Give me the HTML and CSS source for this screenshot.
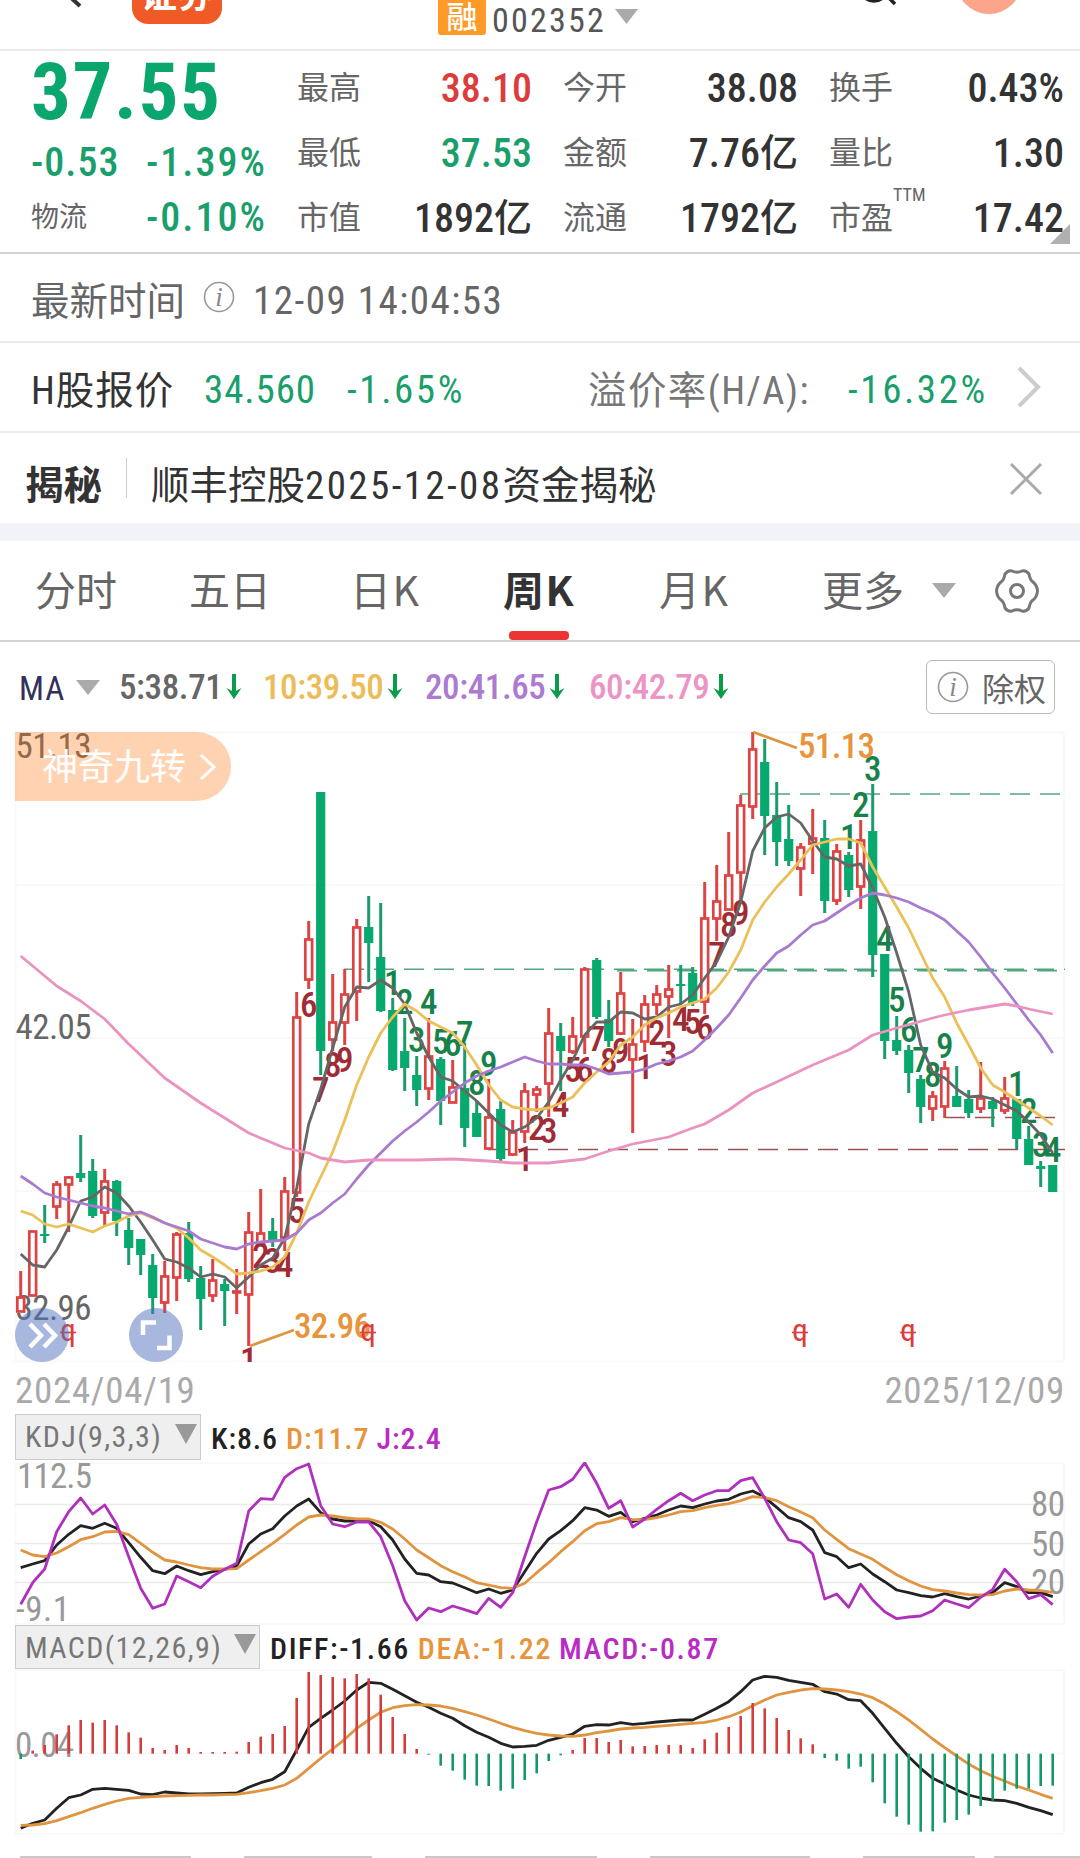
FILE: index.html
```html
<!DOCTYPE html>
<html lang="zh-CN">
<head>
<meta charset="utf-8">
<title>顺丰控股 002352</title>
<link rel="stylesheet" href="styles.css">
</head>
<body>
<header class="topbar">
  <svg class="back" width="30" height="8" viewBox="0 0 30 8"><path d="M15 -4L26 6" stroke="#333" stroke-width="4" fill="none"/></svg>
  <span class="broker">证券</span>
  <span class="rong">融</span>
  <span class="code">002352</span>
  <i class="tri tri-code"></i>
  <svg class="search" width="40" height="8" viewBox="0 0 40 8"><circle cx="14" cy="-13" r="14" fill="none" stroke="#222" stroke-width="3.5"/><path d="M25 -6L35 4" stroke="#222" stroke-width="3.5"/></svg>
  <svg class="avatar" width="66" height="16" viewBox="0 0 66 16"><circle cx="33" cy="-19" r="33" fill="#fda58a"/></svg>
</header>

<section class="quote">
  <div class="price">
    <strong class="last">37.55</strong>
    <div class="chg"><span>-0.53</span><span class="pct">-1.39%</span></div>
    <div class="chg"><em>物流</em><span class="pct">-0.10%</span></div>
  </div>
  <dl class="stats">
    <dt>最高</dt><dd class="up">38.10</dd><dt>今开</dt><dd>38.08</dd><dt>换手</dt><dd>0.43%</dd>
    <dt>最低</dt><dd class="down">37.53</dd><dt>金额</dt><dd>7.76<b>亿</b></dd><dt>量比</dt><dd>1.30</dd>
    <dt>市值</dt><dd>1892<b>亿</b></dd><dt>流通</dt><dd>1792<b>亿</b></dd><dt>市盈<sup>TTM</sup></dt><dd>17.42</dd>
  </dl>
  <svg class="corner" width="20" height="20" viewBox="0 0 20 20"><path d="M20 0V20H0Z" fill="#b0b0b0"/></svg>
</section>

<section class="row time">
  <span class="cjk grey">最新时间</span>
  <svg class="info" width="32" height="32" viewBox="0 0 32 32"><circle cx="16" cy="16" r="14.5"/><text x="16" y="25">i</text></svg>
  <span class="num grey stamp">12-09 14:04:53</span>
</section>

<section class="row hshare">
  <span class="cjk dark">H股报价</span>
  <span class="num down">34.560</span>
  <span class="num down pct">-1.65%</span>
  <span class="cjk prem">溢价率(H/A):</span>
  <span class="num down pct">-16.32%</span>
  <svg width="26" height="42" viewBox="0 0 26 42"><path d="M3 2L22 21L3 40" fill="none" stroke="#ccc" stroke-width="4"/></svg>
</section>

<section class="row secret">
  <b class="cjk">揭秘</b>
  <i class="bar"></i>
  <span class="cjk dark">顺丰控股<span class="num">2025-12-08</span>资金揭秘</span>
  <svg width="34" height="34" viewBox="0 0 34 34"><path d="M2 2L32 32M32 2L2 32" stroke="#aaa" stroke-width="3"/></svg>
</section>

<nav class="tabs">
  <span>分时</span><span>五日</span><span>日K</span><span class="on">周K</span><span>月K</span><span>更多</span>
  <i class="tri"></i>
  <svg width="44" height="46" viewBox="0 0 44 46"><path d="M10 6Q13 2 17 3Q22 5.500 27 3Q31 2 34 6Q35 12 38 14Q42 17 42.500 23Q42 29 38 32Q35 34 34 40Q31 44 27 43Q22 40.500 17 43Q13 44 10 40Q9 34 6 32Q2 29 1.500 23Q2 17 6 14Q9 12 10 6Z" fill="none" stroke="#777" stroke-width="3" stroke-linejoin="round"/><circle cx="22" cy="23" r="6.500" fill="none" stroke="#777" stroke-width="3"/></svg>
</nav>

<section class="ma">
  <span class="ma-name">MA</span><i class="tri"></i>
  <span class="m5">5:38.71<svg class="arr" viewBox="0 0 16 25"><path d="M8 0V20"/><path class="head" d="M0.500 14L8 18L15.500 14L8 25Z"/></svg></span>
  <span class="m10">10:39.50<svg class="arr" viewBox="0 0 16 25"><path d="M8 0V20"/><path class="head" d="M0.500 14L8 18L15.500 14L8 25Z"/></svg></span>
  <span class="m20">20:41.65<svg class="arr" viewBox="0 0 16 25"><path d="M8 0V20"/><path class="head" d="M0.500 14L8 18L15.500 14L8 25Z"/></svg></span>
  <span class="m60">60:42.79<svg class="arr" viewBox="0 0 16 25"><path d="M8 0V20"/><path class="head" d="M0.500 14L8 18L15.500 14L8 25Z"/></svg></span>
  <button class="adjust"><svg class="info" width="32" height="32" viewBox="0 0 32 32"><circle cx="16" cy="16" r="14.500"/><text x="16" y="25">i</text></svg>除权</button>
</section>

<section class="kchart">
  <svg id="kline" width="1080" height="640" viewBox="0 725 1080 640"></svg>
  <div class="nine">神奇九转<svg width="18" height="28" viewBox="0 0 18 28"><path d="M2 2L15 14L2 26" fill="none" stroke="#fff" stroke-width="3"/></svg></div>
  <svg class="round expand" width="54" height="54" viewBox="0 0 54 54"><circle cx="27" cy="27" r="27"/><path d="M15 16L26 27.500L15 39M29 16L40 27.500L29 39"/></svg>
  <svg class="round full" width="54" height="54" viewBox="0 0 54 54"><circle cx="27" cy="27" r="27"/><path d="M14 27V14.500H27M28 40H40.500V27.500"/></svg>
</section>
<div class="dates"><span>2024/04/19</span><span>2025/12/09</span></div>

<div class="ind">
  <span class="pick kdj-pick">KDJ(9,3,3)<i class="tri"></i></span>
  <span class="k">K:8.6</span><span class="d">D:11.7</span><span class="j">J:2.4</span>
</div>
<svg id="kdj" width="1080" height="163" viewBox="0 1462 1080 163"></svg>
<div class="ind macd">
  <span class="pick macd-pick">MACD(12,26,9)<i class="tri"></i></span>
  <span class="k">DIFF:-1.66</span><span class="d">DEA:-1.22</span><span class="j">MACD:-0.87</span>
</div>
<svg id="macd" width="1080" height="187" viewBox="0 1669 1080 187"></svg>
<footer class="stubs"><i></i><i></i><i></i><i></i><i></i><i></i></footer>
<script src="chart.js"></script>
</body>
</html>
```
FILE: styles.css
```css
* { box-sizing: border-box; }
body {
  margin: 0;
  width: 1080px;
  height: 1858px;
  overflow: hidden;
  background: #fff;
  color: #333;
  font-family: "Roboto Condensed", "Noto Sans CJK SC", sans-serif;
}
i, em { font-style: normal; }
svg { display: block; flex: none; }
.tri {
  flex: none;
  width: 24px;
  height: 15px;
  background: #aaa;
  clip-path: polygon(0 0, 100% 0, 50% 100%);
}
.up { color: #dc3c3c; }
.down { color: #1a9f6c; }
.grey { color: #666; }
.dark { color: #333; }

.topbar {
  display: flex;
  align-items: flex-start;
  height: 51px;
  border-bottom: 2px solid #ebebeb;
  overflow: hidden;
}
.back { margin-left: 54px; }
.broker {
  width: 90px;
  height: 54px;
  margin: -30px 0 0 48px;
  border-radius: 16px;
  background: #f05a26;
  color: #fff;
  font: 700 36px/44px "Noto Sans CJK SC", sans-serif;
  text-align: center;
}
.rong {
  width: 48px;
  height: 47px;
  margin: -12px 0 0 216px;
  border-radius: 3px;
  background: #fd9a28;
  color: #fff;
  font: 500 31px/54px "Noto Sans CJK SC", sans-serif;
  text-align: center;
}
.code {
  width: 121px;
  margin-left: 6px;
  color: #555;
  font-size: 34px;
  line-height: 41px;
  letter-spacing: 2.2px;
}
.tri-code { margin: 9px 0 0 2px; width: 23px; }
.search { margin-left: 222px; }
.avatar { margin-left: 56px; }

.quote {
  position: relative;
  display: grid;
  grid-template-columns: 266px 1fr;
  height: 203px;
  padding-left: 31px;
  border-bottom: 2px solid #d2d2d2;
}
.price { color: #1a9f6c; }
.last {
  display: block;
  height: 80px;
  color: #09a66d;
  font-size: 79px;
  line-height: 83px;
  letter-spacing: 1.6px;
}
.chg {
  display: grid;
  grid-template-columns: 115px 1fr;
  height: 55px;
  font-size: 40px;
  font-weight: 500;
  line-height: 64px;
  letter-spacing: 1px;
}
.chg .pct { letter-spacing: 2px; }
.chg em {
  color: #666;
  font-size: 28px;
  font-weight: 400;
  letter-spacing: 0;
}
.stats {
  display: grid;
  grid-template-columns: 94px 141px 125px 141px 125px 141px;
  grid-auto-rows: 65px;
  margin: 3px 0 0;
}
.stats dt {
  color: #666;
  font-size: 32px;
  line-height: 68px;
  white-space: nowrap;
}
.stats dt:nth-of-type(3n + 2), .stats dt:nth-of-type(3n) { padding-left: 31px; }
.stats dd {
  display: flex;
  justify-content: flex-end;
  margin: 0;
  font-size: 40px;
  font-weight: 500;
  line-height: 69px;
  text-align: right;
  white-space: nowrap;
}
.stats b {
  font-size: 38px;
  font-weight: 500;
}
.stats sup {
  font-size: 18px;
  line-height: 0;
  vertical-align: 28px;
}
.corner { position: absolute; right: 10px; bottom: 8px; }

.row {
  display: flex;
  align-items: center;
  border-bottom: 2px solid #ebebeb;
}
.cjk { font-size: 38.5px; white-space: nowrap; }
.num { font-size: 39px; letter-spacing: 0.9px; white-space: nowrap; padding-top: 6px; }
.num.pct { letter-spacing: 2.6px; }
.info circle { fill: none; stroke: #999; stroke-width: 1.6; }
.info text {
  fill: #888;
  font: italic 27px "Liberation Serif", serif;
  text-anchor: middle;
}
.time { height: 89px; padding-left: 31px; }
.time .info { margin: -2px 18px 0 18px; }
.time .cjk { width: 154px; }
.time .num { letter-spacing: 1.5px; }
.hshare {
  display: grid;
  grid-template-columns: 173px 143px 241px 260px 168px 1fr;
  height: 90px;
  padding-left: 31px;
}
.hshare .cjk { letter-spacing: 1px; }
.hshare .prem { color: #777; letter-spacing: 1.4px; }
.secret { height: 90px; padding-left: 25px; border: 0; }
.secret .cjk { padding-top: 7px; }
.secret .num { letter-spacing: 2.4px; }
.secret b { width: 101px; font-weight: 700; color: #333; }
.bar { width: 1px; height: 40px; background: #ccc; margin-right: 24px; }
.secret svg { margin: 1px 37px 0 auto; }

.tabs {
  display: flex;
  align-items: center;
  height: 119px;
  border-top: 18px solid #f2f3f8;
  border-bottom: 2px solid #d2d2d2;
  padding-left: 35px;
  color: #666;
  font: 400 41px/59px "Noto Sans CJK SC", sans-serif;
}
.tabs span { position: relative; top: -2px; width: 154px; white-space: nowrap; }
.tabs span:nth-child(2) { width: 161px; }
.tabs span:nth-child(3) { width: 153px; letter-spacing: 1.5px; }
.tabs span:nth-child(5) { width: 163px; letter-spacing: 1.5px; }
.tabs span:nth-child(6) { width: 110px; }
.tabs .on { width: 156px; color: #333; font-weight: 700; letter-spacing: 1.5px; }
.tabs .on::after {
  content: "";
  position: absolute;
  left: 6px;
  bottom: -22px;
  width: 60px;
  height: 9px;
  border-radius: 4px;
  background: #ec3434;
}
.tabs svg { margin-left: 39px; }

.ma {
  display: grid;
  grid-template-columns: 57px 43px 144px 162px 164px 337px 129px;
  align-items: center;
  height: 83px;
  padding: 8px 0 0 19px;
  font-size: 35px;
  line-height: 40px;
  letter-spacing: -0.4px;
  font-weight: 500;
}
.ma > span { display: flex; align-items: center; }
.ma .ma-name { color: #33305c; font-size: 33px; font-weight: 400; padding-top: 3px; letter-spacing: 1px; }
.m5 { color: #666; }
.m10 { color: #ebbc58; }
.m20 { color: #ad7ad2; }
.m60 { color: #ec94c4; }
.arr { width: 16px; height: 25px; margin: -3px 0 0 4px; }
.arr path { fill: none; stroke: #0a9c4a; stroke-width: 4; }
.arr .head { fill: #0a9c4a; stroke: none; }
.adjust {
  display: flex;
  align-items: center;
  justify-content: space-between;
  height: 54px;
  margin-top: -1px;
  padding: 0 8px 0 10px;
  border: 1.5px solid #bbb;
  border-radius: 6px;
  background: #fff;
  color: #666;
  font: 400 32px/48px "Noto Sans CJK SC", sans-serif;
}

.kchart { position: relative; height: 640px; }
.nine {
  position: absolute;
  left: 15px;
  top: 7px;
  display: flex;
  align-items: center;
  justify-content: space-between;
  width: 216px;
  height: 69px;
  padding: 3px 14px 0 27px;
  border-radius: 0 36px 36px 0;
  background: rgba(255, 113, 3, 0.31);
  color: #fff;
  font-size: 36px;
  line-height: 66px;
}
.nine svg { margin-top: -3px; }
.round { position: absolute; top: 583px; }
.round circle { fill: rgba(80, 112, 190, 0.5); }
.round path { fill: none; stroke: #fff; stroke-width: 4.5; }
.expand { left: 15px; }
.full { left: 129px; }

.dates {
  display: flex;
  justify-content: space-between;
  height: 49px;
  padding: 0 15px;
  color: #aaa;
  font-size: 37px;
  line-height: 52px;
  letter-spacing: 0.7px;
}
.ind {
  display: flex;
  height: 48px;
  padding-left: 15px;
  font-size: 30px;
  font-weight: 500;
  line-height: 50px;
  letter-spacing: 0.9px;
}
.kdj-pick { margin: 0 0 2px; }
.macd { height: 44px; line-height: 47px; margin-top: 0; }
.pick {
  display: flex;
  align-items: center;
  justify-content: space-between;
  padding: 0 3px 0 9px;
  border: 1.5px solid #ccc;
  background: #efefef;
  color: #777;
  font-weight: 400;
}
.ind .pick { letter-spacing: 1.4px; }
.pick .tri { width: 22px; height: 20px; margin-bottom: 6px; background: #999; }
.kdj-pick { width: 186px; }
.macd-pick { width: 245px; }
.k { margin-left: 10px; color: #222; }
.d { margin-left: 8px; color: #e8943a; }
.j { margin-left: 7px; color: #b92cc4; }
.macd span + span { letter-spacing: 1.6px; }
.stubs {
  display: grid;
  grid-template-columns: 171px 128px 172px 160px 112px 82px;
  column-gap: 53px;
  padding-left: 20px;
  height: 2px;
}
.stubs i { background: #c8c8c8; }
.stubs i:last-child { margin-left: -34px; }

.grid { stroke: #f9f9f9; stroke-width: 2; fill: none; }
.axis { fill: #666; font-size: 35px; }
.axis-light { fill: #999; font-size: 35px; }
.peak { fill: #e8943a; font-size: 35px; font-weight: 500; }
.turn { font-size: 35px; font-weight: 500; text-anchor: middle; }
.mark { fill: #dc3c3c; font-size: 31px; font-weight: 400; text-anchor: middle; }
.ln { fill: none; stroke-width: 2.8; stroke-linejoin: round; }
```
FILE: chart.js
```javascript
const X0 = 20.7, STEP = 12;
const px = i => X0 + STEP * i;
const GREEN = '#07a96e', RED = '#dc4444', WICK = '#1b9c6c';

const line = (pts, color) =>
  `<polyline class="ln" stroke="${color}" points="${pts.map(p => px(p[0]).toFixed(1) + ',' + p[1].toFixed(1)).join(' ')}"/>`;
const seg = (x1, y1, x2, y2, color, w, extra = '') =>
  `<path d="M${x1} ${y1}L${x2} ${y2}" stroke="${color}" stroke-width="${w}" ${extra}/>`;
const text = (cls, x, y, s, w, extra = '') =>
  `<text class="${cls}" x="${x}" y="${y}" ${w ? `textLength="${w}"` : ''} ${extra}>${s}</text>`;
const each = a => a.map((v, i) => [i, v]);

// direction, high, body top, body bottom, low
const candles = `r 1271 1297 1312 1312|r 1231 1231 1296 1296|g 1205 1234 1236 1243|r 1181 1184 1207 1219|r 1176 1177 1185 1232|g 1135 1173 1178 1182|g 1159 1171 1216 1218|r 1169 1181 1213 1226|g 1180 1181 1221 1236|g 1218 1230 1248 1265|g 1239 1239 1255 1275|g 1254 1265 1298 1314|r 1261 1276 1303 1313|r 1232 1234 1278 1301|g 1222 1233 1279 1282|g 1266 1278 1299 1330|r 1259 1280 1296 1302|g 1279 1284 1291 1326|r 1269 1291 1293 1314|r 1212 1232 1295 1346|r 1189 1233 1245 1245|g 1218 1231 1241 1247|r 1177 1191 1238 1251|r 992 1017 1193 1197|r 921 939 980 989|g 792 792 1051 1075|r 974 1022 1040 1051|r 969 994 1023 1045|r 919 927 992 1021|g 896 927 943 982|g 903 957 1011 1012|g 998 1010 1070 1071|g 1018 1051 1068 1091|g 1056 1075 1090 1106|r 1018 1056 1089 1100|g 1057 1059 1101 1125|r 1060 1087 1103 1103|g 1043 1088 1128 1147|g 1101 1113 1137 1137|r 1079 1117 1149 1150|g 1101 1109 1159 1161|r 1120 1132 1155 1156|r 1083 1091 1132 1143|r 1086 1089 1095 1112|r 1008 1033 1084 1117|g 1023 1036 1051 1091|r 1017 1036 1052 1054|r 967 969 1037 1054|g 958 960 1017 1019|g 1000 1019 1041 1047|r 972 993 1034 1035|r 1019 1044 1060 1133|r 995 1004 1042 1052|r 985 994 1005 1015|r 965 989 997 1038|g 965 984 986 1003|g 967 973 1003 1006|r 882 918 1002 1014|r 865 901 919 941|r 832 875 910 910|r 795 805 873 902|r 732 749 807 819|g 739 762 816 855|g 782 815 842 866|g 805 839 861 866|r 843 847 869 896|r 809 838 844 874|g 820 838 901 913|r 844 851 901 905|g 852 855 890 897|r 820 840 887 909|g 784 831 955 977|g 954 954 1041 1059|g 1016 1040 1051 1055|g 1045 1050 1073 1093|g 1075 1079 1107 1123|r 1091 1096 1109 1121|r 1061 1068 1107 1118|g 1066 1096 1107 1107|g 1090 1099 1113 1118|r 1062 1098 1109 1113|g 1097 1101 1109 1127|r 1077 1098 1111 1114|g 1099 1099 1139 1149|g 1126 1139 1165 1165|g 1161 1166 1169 1187|g 1165 1165 1192 1192`
  .split('|').map(s => s.split(' ').map((v, i) => i ? +v : v));

const ma5 = each([1254,1265,1267,1250,1227,1201,1197,1187,1193,1206,1222,1240,1259,1262,1268,1277,1274,1277,1288,1277,1265,1258,1238,1188,1124,1089,1048,1007,987,988,980,988,1004,1033,1057,1077,1081,1091,1101,1113,1125,1132,1127,1118,1102,1080,1060,1035,1022,1022,1012,1013,1019,1017,1007,1004,995,978,962,937,902,851,828,817,814,823,841,857,859,866,864,888,917,953,992,1045,1072,1078,1089,1097,1096,1099,1105,1111,1122,1135,1153]);
const ma10 = each([1211,1215,1224,1227,1224,1228,1232,1226,1222,1216,1213,1218,1223,1228,1238,1250,1257,1265,1274,1273,1271,1267,1257,1233,1202,1177,1152,1120,1085,1057,1033,1017,1004,1011,1021,1027,1033,1047,1065,1085,1100,1107,1109,1110,1108,1103,1097,1083,1072,1062,1045,1037,1025,1018,1013,1007,1003,999,988,972,950,920,902,887,874,860,845,842,839,839,843,867,887,907,928,953,978,997,1023,1045,1068,1085,1092,1100,1108,1116,1125]);
const ma20 = each([1176,1184,1193,1197,1200,1203,1206,1208,1211,1214,1212,1217,1223,1227,1231,1239,1243,1247,1249,1244,1242,1241,1240,1233,1220,1213,1203,1194,1179,1165,1153,1141,1131,1122,1112,1101,1092,1083,1076,1071,1067,1062,1057,1061,1064,1064,1065,1065,1069,1074,1073,1072,1069,1064,1061,1057,1051,1040,1028,1015,998,980,966,953,946,935,925,921,913,905,898,893,895,898,902,908,913,920,931,942,957,973,988,1004,1020,1035,1053]);
const ma60 = [[0,956],[3,986],[5,1001],[7,1019],[9,1044],[12,1078],[15,1103],[17,1118],[19,1133],[22,1148],[24,1153],[25,1158],[27,1162],[29,1160],[33,1160],[36,1159],[39,1161],[41,1163],[44,1163],[47,1159],[49,1151],[51,1144],[54,1137],[56,1128],[57,1124],[59,1110],[61,1093],[63,1082],[66,1065],[69,1050],[71,1035],[73,1028],[76,1018],[77,1015],[79,1010],[82,1004],[83,1006],[84,1009],[86,1014]];

// nine-turn counts: candle index, digit, baseline
const buyTurns = [[19,1,1372],[20,2,1268],[21,3,1273],[22,4,1277],[23,5,1223],[24,6,1017],[25,7,1102],[26,8,1077],[27,9,1072],[42,1,1171],[43,2,1140],[44,3,1143],[45,4,1117],[46,5,1082],[47,6,1082],[48,7,1051],[49,8,1073],[50,9,1063],[52,1,1079],[53,2,1045],[54,3,1066],[55,4,1031],[56,5,1034],[57,6,1040],[58,7,967],[59,8,937],[60,9,925]];
const sellTurns = [[31,1,995],[32,2,1014],[33,3,1052],[34,4,1014],[35,5,1054],[36,6,1056],[37,7,1046],[38,8,1095],[39,9,1076],[69,1,849],[70,2,817],[71,3,781],[72,4,951],[73,5,1012],[74,6,1042],[75,7,1072],[76,8,1087],[77,9,1058],[83,1,1096],[84,2,1123],[85,3,1157],[86,4,1162]];

let k = '<clipPath id="plot"><rect x="0" y="725" width="1080" height="637"/></clipPath>';
k += '<path class="grid" d="M15 732.500H1064M15 885H1064M15 1038H1064M15 1191H1064M15 1361.500H1064M15.500 732V1362M1064 732V1362"/>';
const dash = 'stroke-dasharray="20 10"';
k += seg(740, 794, 1060, 794, '#52a67c', 1.6, dash) + seg(344, 969.3, 1065, 969.3, '#52a67c', 1.6, dash) +
     seg(617, 970.6, 1065, 970.6, '#52a67c', 1.6, dash) + seg(488, 1149.6, 1065, 1149.6, '#9c5054', 1.5, dash) +
     seg(945, 1117.5, 1065, 1117.5, '#9c5054', 1.5, dash);
k += text('axis', 15.5, 757.5, '51.13', 76) + text('axis', 15.5, 1039, '42.05', 76) + text('axis', 15.5, 1320, '32.96', 76);
candles.forEach(([d, h, t, b, l], i) => {
  const x = px(i);
  if (d === 'r') {
    k += seg(x, h, x, t, RED, 3) + seg(x, b, x, l, RED, 3);
    k += `<rect x="${x - 3.4}" y="${t + 0.5}" width="6.8" height="${Math.max(b - t - 1, 1)}" fill="#fff" stroke="${RED}" stroke-width="2.7"/>`;
  } else {
    k += seg(x, h, x, l, WICK, 3);
    k += `<rect x="${x - 4.6}" y="${t}" width="9.2" height="${b - t}" fill="${GREEN}"/>`;
  }
});
k += '<g clip-path="url(#plot)">';
buyTurns.forEach(([i, n, y]) => k += text('turn', px(i), y, n, 0, 'fill="#9f2b34"'));
sellTurns.forEach(([i, n, y]) => k += text('turn', px(i), y, n, 0, 'fill="#16824a"'));
k += '</g>';
k += line(ma5, '#666') + line(ma10, '#ebc058') + line(ma20, '#a97bd0') + line(ma60, '#ea93c0');
k += seg(753, 732, 797, 748, '#e0943f', 2.8) + text('peak', 798, 757.5, '51.13', 77);
k += seg(250, 1346, 294, 1330, '#e0943f', 2.8) + text('peak', 294, 1338, '32.96', 77);
[68, 368, 800, 908].forEach(x => k += text('mark', x, 1341, 'q', 0) + seg(x - 8, 1332.5, x + 8, 1332.5, '#dc3c3c', 1.6));
document.getElementById('kline').innerHTML = k;

const kd = v => 1370 + v / 3;
const K = [593,582,572,525,493,467,475,460,475,518,562,602,611,588,602,614,605,598,588,522,492,476,438,408,387,428,447,453,453,452,470,510,567,610,615,635,639,653,668,657,670,660,605,550,507,482,452,413,420,439,427,455,445,435,420,408,413,402,393,388,372,363,382,412,443,455,480,548,560,593,582,612,635,660,668,677,681,671,680,687,678,668,638,650,668,668,680].map(kd);
const D = [540,555,560,549,530,509,500,486,484,494,520,547,570,576,585,593,597,597,596,570,545,520,493,465,441,435,438,443,447,447,457,477,507,540,563,587,605,620,638,645,653,655,640,608,578,545,515,482,461,455,443,449,449,443,435,425,422,413,406,401,392,380,383,392,410,426,443,480,508,536,552,568,592,614,632,648,659,663,669,674,675,674,663,657,660,662,667].map(kd);
const J = [703,638,597,485,425,384,432,405,463,560,655,715,702,618,635,653,619,598,580,423,386,388,322,296,282,407,462,470,456,456,500,587,692,750,714,725,708,719,731,685,712,668,560,455,360,350,328,278,340,415,392,471,447,418,392,370,392,375,362,362,332,323,385,455,510,518,551,687,672,712,643,690,725,746,741,738,722,690,702,713,682,658,598,635,686,674,704].map(kd);
document.getElementById('kdj').innerHTML =
  '<path class="grid" d="M15 1463H1064M15.500 1462V1624M1064 1462V1624M15 1624H1064"/>' +
  '<path d="M15 1504.500H1064M15 1543.500H1064M15 1582.500H1064" stroke="#ebebeb" stroke-width="1.600"/>' +
  text('axis-light', 17, 1488, '112.5', 75) + text('axis-light', 16, 1621, '-9.1', 54) +
  text('axis-light', 1031, 1516, '80', 34) + text('axis-light', 1031, 1555.5, '50', 34) + text('axis-light', 1031, 1594, '20', 34) +
  line(each(K), '#222') + line(each(D), '#e0943f') + line(each(J), '#b030bd');

const mc = v => 1620 + v / 3;
const DIFF = [625,610,600,565,533,525,508,505,508,511,522,524,516,519,522,522,521,520,519,502,488,478,455,390,322,295,270,243,210,187,190,208,227,247,262,280,295,317,337,352,370,381,379,376,361,352,342,319,314,315,308,313,310,306,303,300,300,283,265,245,215,180,169,172,181,187,193,215,222,239,242,280,325,370,410,445,475,492,510,525,534,540,542,550,562,572,584].map(mc);
const DEA = [616,615,611,602,590,578,565,553,543,535,532,530,528,527,526,525,525,524,523,518,512,505,495,475,445,415,387,358,325,300,277,263,257,254,255,258,265,275,285,297,310,322,332,340,345,348,349,345,338,333,327,324,322,319,316,313,310,307,300,290,276,257,240,225,217,210,206,207,210,215,222,233,252,275,300,328,357,383,408,432,452,469,483,498,510,523,535].map(mc);
const BARS = [417,392,375,343,316,300,308,300,316,337,353,384,390,375,384,396,396,396,395,366,350,342,318,234,156,165,171,175,162,175,224,291,342,387,404,437,452,479,497,498,512,506,480,460,423,406,390,354,354,366,360,379,378,375,375,375,384,358,338,321,288,249,265,294,330,355,373,414,422,446,440,487,550,590,614,635,634,608,600,584,558,542,512,506,506,498,497].map(mc);
const zero = mc(401);
let m = '<path class="grid" d="M15 1670H1064M15 1753.500H1064M15 1834H1064M15.500 1669V1834M1064 1669V1834"/>' +
  text('axis-light', 15, 1757, '0.04', 59) + line(each(DIFF), '#222') + line(each(DEA), '#e0943f');
BARS.forEach((y, i) => m += seg(px(i), zero, px(i), y, y < zero ? '#d63c3c' : '#129a68', 2.6));
document.getElementById('macd').innerHTML = m;
```
